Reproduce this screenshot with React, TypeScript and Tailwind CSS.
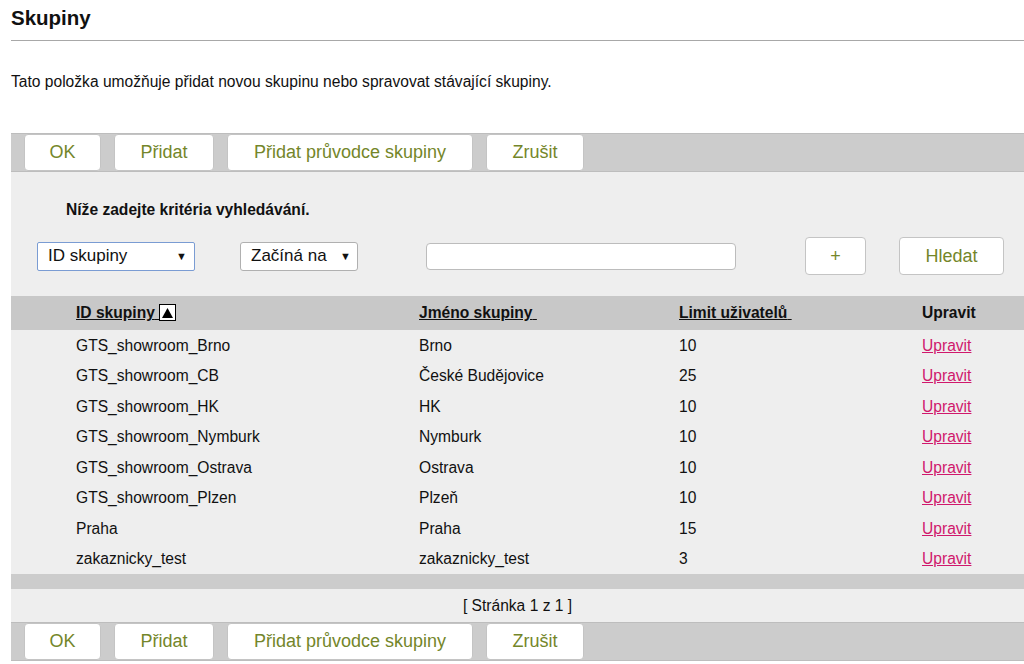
import React from 'react';

const rows = [
  { id: 'GTS_showroom_Brno', name: 'Brno', limit: '10' },
  { id: 'GTS_showroom_CB', name: 'České Budějovice', limit: '25' },
  { id: 'GTS_showroom_HK', name: 'HK', limit: '10' },
  { id: 'GTS_showroom_Nymburk', name: 'Nymburk', limit: '10' },
  { id: 'GTS_showroom_Ostrava', name: 'Ostrava', limit: '10' },
  { id: 'GTS_showroom_Plzen', name: 'Plzeň', limit: '10' },
  { id: 'Praha', name: 'Praha', limit: '15' },
  { id: 'zakaznicky_test', name: 'zakaznicky_test', limit: '3' },
];

const btn =
  'h-[37px] bg-white border border-[#c4c4c4] rounded-[4px] text-[18px] text-[#74862a] flex items-center justify-center';

const Toolbar: React.FC = () => (
  <div className="flex gap-[13px] pl-[13px] bg-[#cccccc] border-y border-[#bdbdbd] h-[39px]">
    <button className={`${btn} w-[77px]`}>OK</button>
    <button className={`${btn} w-[100px]`}>Přidat</button>
    <button className={`${btn} w-[246px]`}>Přidat průvodce skupiny</button>
    <button className={`${btn} w-[98px]`}>Zrušit</button>
  </div>
);

const App: React.FC = () => {
  return (
    <div className="w-[1024px] h-[664px] overflow-hidden bg-white text-[#111] font-['Liberation_Sans',Arial,sans-serif]">
      <div className="pl-[11px]">
        <h1 className="text-[20.5px] font-bold pt-[6px] h-[40px] leading-[24px]">Skupiny</h1>
        <div className="border-t border-[#a8a8a8]" />
        <p className="text-[15.6px] mt-[32px] leading-[18px]">
          Tato položka umožňuje přidat novou skupinu nebo spravovat stávající skupiny.
        </p>

        <div className="mt-[42px]">
          <Toolbar />

          <div className="bg-[#eeeeee] pt-[29px] h-[124px]">
            <p className="pl-[55px] text-[15.6px] font-bold leading-[18px]">Níže zadejte kritéria vyhledávání.</p>
            <div className="flex items-center mt-[18px] h-[38px]">
              <div className="ml-[26px] w-[158px] h-[29px] bg-white border border-[#7a9cd3] rounded-[2px] flex items-center justify-between pl-[10px] pr-[7px] text-[17px]">
                <span>ID skupiny</span>
                <span className="text-[11px]">▼</span>
              </div>
              <div className="ml-[45px] w-[118px] h-[29px] bg-white border border-[#b0b0b0] rounded-[3px] flex items-center justify-between pl-[10px] pr-[6px] text-[17px]">
                <span>Začíná na</span>
                <span className="text-[11px]">▼</span>
              </div>
              <div className="ml-[68px] w-[310px] h-[27px] bg-white border border-[#bcbcbc] rounded-[4px]" />
              <button className={`${btn} ml-[69px] w-[61px] h-[38px] text-[16px]`}>+</button>
              <button className={`${btn} ml-[33px] w-[105px] h-[38px]`}>Hledat</button>
            </div>
          </div>

          <div className="text-[15.6px]">
            <div className="grid grid-cols-[343px_260px_243px_1fr] pl-[65px] bg-[#c8c8c8] h-[34px] items-center font-bold">
              <span className="flex items-center">
                <span className="underline">ID skupiny{'\u00a0'}</span>
                <span className="inline-flex items-center justify-center w-[17px] h-[17px] border-[1.5px] border-black bg-white">
                  <svg width="11" height="10" viewBox="0 0 11 10">
                    <path d="M5.5 0 L11 10 L0 10 Z" fill="#000" />
                  </svg>
                </span>
              </span>
              <span className="underline">Jméno skupiny{'\u00a0'}</span>
              <span className="underline">Limit uživatelů{'\u00a0'}</span>
              <span>Upravit</span>
            </div>
            <div className="bg-[#eeeeee]">
              {rows.map((r) => (
                <div key={r.id} className="grid grid-cols-[343px_260px_243px_1fr] pl-[65px] h-[30.5px] items-center">
                  <span>{r.id}</span>
                  <span>{r.name}</span>
                  <span>{r.limit}</span>
                  <a href="#" className="text-[#d0186c] underline">Upravit</a>
                </div>
              ))}
            </div>
            <div className="h-[15px] bg-[#cccccc]" />
            <div className="bg-[#eeeeee] h-[33px] flex items-center justify-center">[ Stránka 1 z 1 ]</div>
          </div>

          <Toolbar />
        </div>
      </div>
    </div>
  );
};

export default App;
